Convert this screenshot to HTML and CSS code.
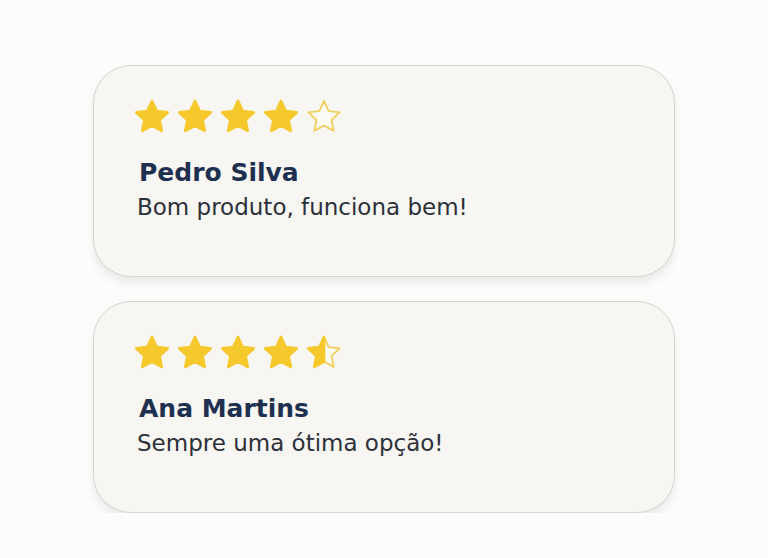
FILE: index.html
```html
<!DOCTYPE html>
<html lang="pt">
<head>
    <meta charset="UTF-8">
    <meta name="viewport" content="width=device-width, initial-scale=1.0">
    <title>Avaliações</title>
    <link rel="stylesheet" href="styles.css">
</head>
<body>
    <div class="reviewList">
        <!-- avaliação 1 -->
        <div class="review">
            <div class="stars">
                <svg class="star" viewBox="0 0 24 24"><path class="full" d="M12 2L15.12 8.71 22.46 9.6 17.04 14.64 18.47 21.9 12 18.3 5.53 21.9 6.96 14.64 1.54 9.6 8.88 8.71Z"/></svg>
                <svg class="star" viewBox="0 0 24 24"><path class="full" d="M12 2L15.12 8.71 22.46 9.6 17.04 14.64 18.47 21.9 12 18.3 5.53 21.9 6.96 14.64 1.54 9.6 8.88 8.71Z"/></svg>
                <svg class="star" viewBox="0 0 24 24"><path class="full" d="M12 2L15.12 8.71 22.46 9.6 17.04 14.64 18.47 21.9 12 18.3 5.53 21.9 6.96 14.64 1.54 9.6 8.88 8.71Z"/></svg>
                <svg class="star" viewBox="0 0 24 24"><path class="full" d="M12 2L15.12 8.71 22.46 9.6 17.04 14.64 18.47 21.9 12 18.3 5.53 21.9 6.96 14.64 1.54 9.6 8.88 8.71Z"/></svg>
                <svg class="star" viewBox="0 0 24 24"><path class="empty" d="M12 2L15.12 8.71 22.46 9.6 17.04 14.64 18.47 21.9 12 18.3 5.53 21.9 6.96 14.64 1.54 9.6 8.88 8.71Z"/></svg>
            </div>
            <h3 class="name">Pedro Silva</h3>
            <p class="text">Bom produto, funciona bem!</p>
        </div>
        <!-- avaliação 2 -->
        <div class="review">
            <div class="stars">
                <svg class="star" viewBox="0 0 24 24"><path class="full" d="M12 2L15.12 8.71 22.46 9.6 17.04 14.64 18.47 21.9 12 18.3 5.53 21.9 6.96 14.64 1.54 9.6 8.88 8.71Z"/></svg>
                <svg class="star" viewBox="0 0 24 24"><path class="full" d="M12 2L15.12 8.71 22.46 9.6 17.04 14.64 18.47 21.9 12 18.3 5.53 21.9 6.96 14.64 1.54 9.6 8.88 8.71Z"/></svg>
                <svg class="star" viewBox="0 0 24 24"><path class="full" d="M12 2L15.12 8.71 22.46 9.6 17.04 14.64 18.47 21.9 12 18.3 5.53 21.9 6.96 14.64 1.54 9.6 8.88 8.71Z"/></svg>
                <svg class="star" viewBox="0 0 24 24"><path class="full" d="M12 2L15.12 8.71 22.46 9.6 17.04 14.64 18.47 21.9 12 18.3 5.53 21.9 6.96 14.64 1.54 9.6 8.88 8.71Z"/></svg>
                <svg class="star" viewBox="0 0 24 24"><path class="empty" d="M12 2L15.12 8.71 22.46 9.6 17.04 14.64 18.47 21.9 12 18.3 5.53 21.9 6.96 14.64 1.54 9.6 8.88 8.71Z"/><path class="full" d="M12 2V18.3L5.53 21.9 6.96 14.64 1.54 9.6 8.88 8.71Z"/></svg>
            </div>
            <h3 class="name">Ana Martins</h3>
            <p class="text">Sempre uma ótima opção!</p>
        </div>
    </div>
</body>
</html>
```

FILE: styles.css
```css
* {margin: 0; padding: 0; box-sizing: border-box;}
body {background: #fcfcfb; font-family: "DejaVu Sans", sans-serif;}

.reviewList {display: flex; flex-direction: column; gap: 24px; padding: 65px 0 0 93px;}
.review {width: 582px; height: 212px; padding: 32px 40px 0 40px; background: #f7f6f2; border: 1.5px solid #d3d3d1; border-radius: 38px; box-shadow: 0 6px 10px rgba(0, 0, 0, 0.08);}

.stars {display: flex; gap: 7px; height: 36px;}
.star {width: 36px; height: 36px; display: block;}
.star .full {fill: #f5c92c; stroke: #f5c92c; stroke-width: 1.8; stroke-linejoin: round;}
.star .empty {fill: #fbfaf5; stroke: #f0cf5a; stroke-width: 1.2; stroke-linejoin: round;}

.name {margin-top: 24px; font-size: 25px; font-weight: 700; color: #1e3050; line-height: 30px; padding-left: 5px;}
.text {margin-top: 5px; font-size: 23px; font-weight: 400; color: #2c3039; line-height: 28px; padding-left: 3px;}
```
